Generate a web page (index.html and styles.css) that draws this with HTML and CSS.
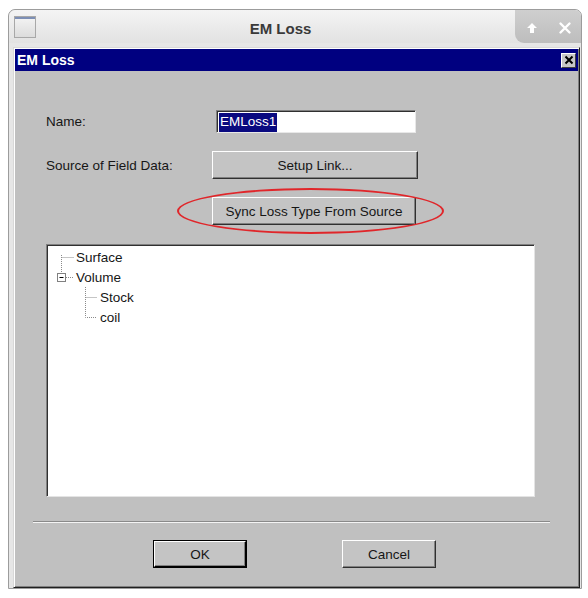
FILE: index.html
```html
<!DOCTYPE html>
<html lang="en">
<head>
  <meta charset="UTF-8" />
  <title>EM Loss</title>
  <link rel="stylesheet" href="styles.css">
</head>
<body>
  <div class="window">
    <div class="win-title">
      <div class="win-icon"><span class="win-icon-bar"></span></div>
      <div class="win-name">EM Loss</div>
      <div class="win-controls">
        <svg class="ctl" width="14" height="14" viewBox="0 0 14 14">
          <path d="M7 2 L12 7 L9 7 L9 12 L5 12 L5 7 L2 7 Z" fill="#fff"/>
        </svg>
        <svg class="ctl" width="14" height="14" viewBox="0 0 14 14">
          <path d="M2.5 2.5 L11.5 11.5 M11.5 2.5 L2.5 11.5" stroke="#fff" stroke-width="2.4" stroke-linecap="round"/>
        </svg>
      </div>
    </div>

    <div class="frame">
      <div class="dialog">
        <div class="caption">
          <span class="caption-text">EM Loss</span>
          <span class="caption-close">
            <svg width="10" height="10" viewBox="0 0 10 10">
              <path d="M1.5 1.5 L8.5 8.5 M8.5 1.5 L1.5 8.5" stroke="#000" stroke-width="2"/>
            </svg>
          </span>
        </div>

        <div class="dialog-body">
          <div class="fields">
            <div class="row">
              <label class="label">Name:</label>
              <div class="textbox"><span class="selected">EMLoss1</span></div>
            </div>
            <div class="row row-gap">
              <label class="label">Source of Field Data:</label>
              <button class="btn btn-wide">Setup Link...</button>
            </div>
            <div class="row row-gap">
              <div class="sync-wrap">
                <button class="btn btn-sync">Sync Loss Type From Source</button>
                <span class="highlight-ring"></span>
              </div>
            </div>

            <div class="tree">
              <div class="tree-row">
                <svg class="tree-lines" width="22" height="20" viewBox="0 0 22 20">
                  <path d="M9.5 8 V20 M9.5 10.5 H22" stroke="#8a8a8a" stroke-dasharray="1 1"/>
                </svg>
                <span>Surface</span>
              </div>
              <div class="tree-row">
                <svg class="tree-lines" width="22" height="20" viewBox="0 0 22 20">
                  <path d="M9.5 0 V6 M14 10.5 H22" stroke="#8a8a8a" stroke-dasharray="1 1"/>
                  <rect x="5.5" y="6.5" width="8" height="8" fill="#fff" stroke="#808080"/>
                  <path d="M7.5 10.5 H11.5" stroke="#000"/>
                </svg>
                <span>Volume</span>
              </div>
              <div class="tree-row tree-child">
                <svg class="tree-lines" width="24" height="20" viewBox="0 0 24 20">
                  <path d="M11.5 0 V20 M11.5 10.5 H23" stroke="#8a8a8a" stroke-dasharray="1 1"/>
                </svg>
                <span>Stock</span>
              </div>
              <div class="tree-row tree-child">
                <svg class="tree-lines" width="24" height="20" viewBox="0 0 24 20">
                  <path d="M11.5 0 V10.5 H23" fill="none" stroke="#8a8a8a" stroke-dasharray="1 1"/>
                </svg>
                <span>coil</span>
              </div>
            </div>
          </div>

          <div class="separator"></div>

          <div class="actions">
            <button class="btn btn-action btn-default">OK</button>
            <button class="btn btn-action">Cancel</button>
          </div>
        </div>
      </div>
    </div>
  </div>
</body>
</html>
```

FILE: styles.css
```css
html, body {
  margin: 0;
  padding: 0;
  background-color: #ffffff;
  font-family: 'Liberation Sans', Arial, sans-serif;
}

.window {
  box-sizing: border-box;
  width: 574px;
  height: 580px;
  margin: 9px 0 0 8px;
  border: 1px solid #9c9c9c;
  border-radius: 7px 7px 0 0;
  background: #e6e6e6;
  display: flex;
  flex-direction: column;
}

.win-title {
  height: 33px;
  display: flex;
  align-items: stretch;
  background: linear-gradient(#f4f4f4, #e2e2e2);
  border-radius: 7px 7px 0 0;
}
.win-icon {
  box-sizing: border-box;
  width: 22px;
  height: 22px;
  margin: 6px 0 0 5px;
  border: 1px solid #a8a8a8;
  background: linear-gradient(#f4f4f4, #dcdcdc);
  display: flex;
  flex-direction: column;
}
.win-icon-bar {
  height: 2px;
  background: #7d8fb5;
}
.win-name {
  flex: 1;
  text-align: center;
  font-weight: 700;
  font-size: 15px;
  color: #3a3a3a;
  line-height: 37px;
  padding-left: 10px;
}
.win-controls {
  width: 66px;
  display: flex;
  align-items: center;
  justify-content: space-around;
  padding-top: 2px;
  background: linear-gradient(#cfcfcf, #bdbdbd);
  border-radius: 0 6px 0 9px;
}

.frame {
  flex: 1;
  display: flex;
  padding: 4px 1px 0 4px;
}

.dialog {
  flex: 1;
  display: flex;
  flex-direction: column;
  border: 1px solid;
  border-color: #d8d8d8 #202020 #202020 #d8d8d8;
  box-shadow: inset 1px 1px #ffffff, inset -1px -1px #808080;
  background: #c0c0c0;
  padding: 1px;
}

.caption {
  height: 22px;
  background: #000080;
  display: flex;
  align-items: center;
  justify-content: space-between;
  padding: 0 2px 0 2px;
}
.caption-text {
  color: #ffffff;
  font-weight: 700;
  font-size: 14px;
}
.caption-close {
  box-sizing: border-box;
  width: 15px;
  height: 15px;
  background: #c8c8c8;
  border: 1px solid;
  border-color: #ffffff #404040 #404040 #ffffff;
  display: flex;
  align-items: center;
  justify-content: center;
}

.dialog-body {
  flex: 1;
  padding-top: 39px;
  font-size: 13.5px;
  color: #161616;
}

.fields {
  padding-left: 31px;
}

.row {
  display: flex;
  align-items: center;
}
.row-gap {
  margin-top: 18px;
}
.label {
  width: 166px;
}

.textbox {
  box-sizing: border-box;
  width: 200px;
  height: 23px;
  margin-left: 4px;
  background: #ffffff;
  border: 1px solid;
  border-color: #808080 #e8e8e8 #e8e8e8 #808080;
  box-shadow: inset 1px 1px #303030;
  padding: 2px 0 0 2px;
  display: flex;
}
.selected {
  background: #0a0a80;
  color: #ffffff;
  line-height: 17px;
  padding: 0 1px;
}

.btn {
  box-sizing: border-box;
  height: 28px;
  font-family: inherit;
  font-size: 13.5px;
  color: #161616;
  background: #c4c4c4;
  border: 1px solid;
  border-color: #ffffff #303030 #303030 #ffffff;
  box-shadow: inset -1px -1px #808080;
  padding: 0;
}
.btn-wide {
  width: 206px;
}

.sync-wrap {
  position: relative;
  margin-left: 166px;
}
.btn-sync {
  width: 204px;
}
.highlight-ring {
  position: absolute;
  left: -35px;
  top: -9px;
  width: 267px;
  height: 46px;
  box-sizing: border-box;
  border: 2px solid #e0262a;
  border-radius: 50%;
  pointer-events: none;
}

.tree {
  box-sizing: border-box;
  width: 489px;
  height: 253px;
  margin-top: 19px;
  background: #ffffff;
  border: 1px solid;
  border-color: #808080 #e4e4e4 #e4e4e4 #808080;
  box-shadow: inset 1px 1px #303030;
  padding: 2px 0 0 5px;
  font-size: 13.5px;
}
.tree-row {
  height: 20px;
  display: flex;
  align-items: center;
}
.tree-lines {
  flex: none;
  margin-right: 2px;
}
.tree-child {
  padding-left: 22px;
}

.separator {
  margin: 24px 28px 0 18px;
  height: 1px;
  background: #8a8a8a;
  border-bottom: 1px solid #f4f4f4;
}

.actions {
  display: flex;
  justify-content: center;
  gap: 95px;
  margin-top: 17px;
  padding-right: 4px;
}
.btn-action {
  width: 94px;
}
.btn-default {
  border: 2px solid;
  border-color: #ffffff #000000 #000000 #ffffff;
  outline: 1px solid #000;
  outline-offset: -1px;
  box-shadow: inset -1px -1px #808080;
}
```
